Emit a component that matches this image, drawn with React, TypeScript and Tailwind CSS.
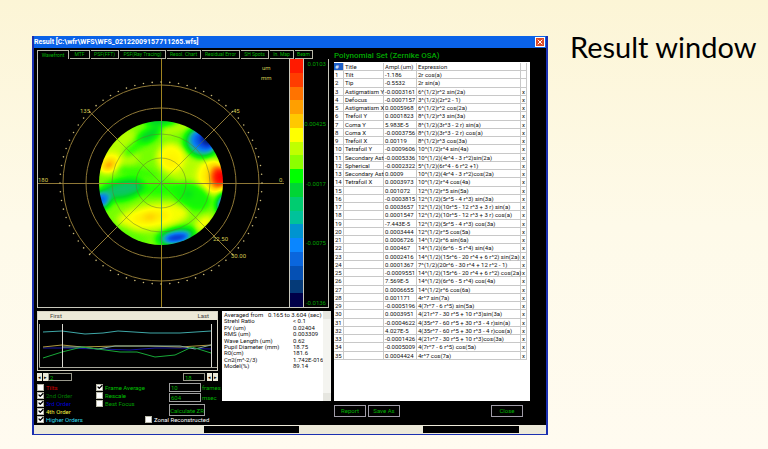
import type { ReactNode } from 'react';
import { Check, X } from 'lucide-react';

const TABS = [
  'Wavefront',
  'MTF',
  'PSF(FFT)',
  'PSF(Ray Tracing)',
  'Resol. Chart',
  'Residual Error',
  'SH Spots',
  'In. Map',
  'Beam',
];

const TAB_WIDTH = [
  'w-8',
  'w-5',
  'w-7',
  'w-[46px]',
  'w-[34px]',
  'w-[38px]',
  'w-7',
  'w-6',
  'w-[18px]',
];

const SCALE_COLORS = [
  'bg-[#ff1a00]',
  'bg-[#ff3d00]',
  'bg-[#ff7300]',
  'bg-[#ff9f00]',
  'bg-[#ffc800]',
  'bg-[#ffff00]',
  'bg-[#c0ff00]',
  'bg-[#8cff00]',
  'bg-[#00ff00]',
  'bg-[#00d535]',
  'bg-[#00cc70]',
  'bg-[#00c29a]',
  'bg-[#0094d0]',
  'bg-[#0a86ff]',
  'bg-[#0a66dd]',
  'bg-[#0550b4]',
  'bg-[#053a78]',
  'bg-[#000048]',
];

const SCALE_LABELS = ['0.0103', '0.00425', '-0.0017', '-0.0075', '-0.0136'];

// [title, amplitude, expression]
const TERMS: [string, string, string][] = [
  ['Tilt', '-1.186', '2r cos(a)'],
  ['Tip', '-0.5532', '2r sin(a)'],
  ['Astigmatism Y', '-0.0003161', '6^(1/2)r^2 sin(2a)'],
  ['Defocus', '-0.0007157', '3^(1/2)(2r^2 - 1)'],
  ['Astigmatism X', '0.0005968', '6^(1/2)r^2 cos(2a)'],
  ['Trefoil Y', '0.0001823', '8^(1/2)r^3 sin(3a)'],
  ['Coma Y', '5.983E-5', '8^(1/2)(3r^3 - 2 r) sin(a)'],
  ['Coma X', '-0.0003756', '8^(1/2)(3r^3 - 2 r) cos(a)'],
  ['Trefoil X', '0.00119', '8^(1/2)r^3 cos(3a)'],
  ['Tetrafoil Y', '-0.0009606', '10^(1/2)r^4 sin(4a)'],
  ['Secondary Ast', '-0.0005336', '10^(1/2)(4r^4 - 3 r^2)sin(2a)'],
  ['Spherical', '-0.0002322', '5^(1/2)(6r^4 - 6 r^2 +1)'],
  ['Secondary Ast', '0.0009', '10^(1/2)(4r^4 - 3 r^2)cos(2a)'],
  ['Tetrafoil X', '0.0003973', '10^(1/2)r^4 cos(4a)'],
  ['', '0.001072', '12^(1/2)r^5 sin(5a)'],
  ['', '-0.0003815', '12^(1/2)(5r^5 - 4 r^3) sin(3a)'],
  ['', '0.0003657', '12^(1/2)(10r^5 - 12 r^3 + 3 r) sin(a)'],
  ['', '0.0001547', '12^(1/2)(10r^5 - 12 r^3 + 3 r) cos(a)'],
  ['', '-7.443E-5', '12^(1/2)(5r^5 - 4 r^3) cos(3a)'],
  ['', '0.0003444', '12^(1/2)r^5 cos(5a)'],
  ['', '0.0006726', '14^(1/2)r^6 sin(6a)'],
  ['', '0.000467', '14^(1/2)(6r^6 - 5 r^4) sin(4a)'],
  ['', '0.0002416', '14^(1/2)(15r^6 - 20 r^4 + 6 r^2) sin(2a)'],
  ['', '0.0001367', '7^(1/2)(20r^6 - 30 r^4 + 12 r^2 - 1)'],
  ['', '-0.0009551', '14^(1/2)(15r^6 - 20 r^4 + 6 r^2) cos(2a)'],
  ['', '7.569E-5', '14^(1/2)(6r^6 - 5 r^4) cos(4a)'],
  ['', '0.0006655', '14^(1/2)r^6 cos(6a)'],
  ['', '0.001171', '4r^7 sin(7a)'],
  ['', '-0.0005196', '4(7r^7 - 6 r^5) sin(5a)'],
  ['', '0.0003951', '4(21r^7 - 30 r^5 + 10 r^3)sin(3a)'],
  ['', '-0.0004622', '4(35r^7 - 60 r^5 + 30 r^3 - 4 r)sin(a)'],
  ['', '4.027E-5', '4(35r^7 - 60 r^5 + 30 r^3 - 4 r)cos(a)'],
  ['', '-0.0001426', '4(21r^7 - 30 r^5 + 10 r^3)cos(3a)'],
  ['', '-0.0005009', '4(7r^7 - 6 r^5) cos(5a)'],
  ['', '0.0004424', '4r^7 cos(7a)'],
];

const RESULTS: [string, string][] = [
  ['Averaged from', '0.165 to 3.604 (sec)'],
  ['Strehl Ratio', '< 0.1'],
  ['PV (um)', '0.02404'],
  ['RMS (um)', '0.003309'],
  ['Wave Length (um)', '0.62'],
  ['Pupil Diameter (mm)', '18.75'],
  ['R0(cm)', '181.6'],
  ['Cn2(m^-2/3)', '1.742E-016'],
  ['Model(%)', '89.14'],
];

// Relief of the wavefront as grey levels: [cx, cy, rx, ry, rotation, level]
const RELIEF: [number, number, number, number, number, number][] = [
  [122, 150, 18, 22, 20, 160],
  [192, 166, 26, 18, 0, 160],
  [136, 172, 24, 5, 10, 132],
  [185, 125, 22, 5, 10, 134],
  [160, 121, 16, 4, 0, 92],
  [176, 128, 24, 5, -18, 160],
  [148, 136, 15, 6, -32, 100],
  [134, 148, 12, 5, -35, 128],
  [201, 143, 17, 15, 20, 90],
  [203, 141, 13, 11, 30, 40],
  [208, 139, 8, 7, 30, 0],
  [171, 158, 14, 15, -10, 180],
  [171, 161, 7, 6, 0, 186],
  [109, 163, 13, 10, -30, 180],
  [109, 165, 7, 5, -30, 218],
  [211, 177, 14, 17, 0, 184],
  [217, 177, 9, 14, 0, 216],
  [221, 177, 9, 10, 0, 255],
  [160, 189, 30, 7, 0, 128],
  [122, 190, 23, 11, -12, 110],
  [124, 189, 19, 8, -12, 88],
  [101, 200, 9, 8, 0, 42],
  [192, 196, 20, 13, 25, 122],
  [188, 194, 4, 3, 0, 100],
  [223, 203, 5, 9, 20, 16],
  [153, 217, 36, 13, -8, 176],
  [151, 217, 19, 6, -8, 188],
  [150, 217, 6, 2, -8, 218],
  [204, 223, 10, 6, -35, 178],
  [128, 234, 22, 6, 25, 140],
  [176, 236, 20, 8, -12, 92],
  [177, 238, 13, 5, -8, 14],
];

const TICKS = Array.from({ length: 72 }, (_, i) => {
  const a = (i * Math.PI) / 36;
  return { x: 161 + 101 * Math.cos(a), y: 183 + 101 * Math.sin(a) };
});

function WavefrontPlot() {
  return (
    <svg viewBox="38 59 251 248" className="h-[248px] w-[251px] shrink-0" role="img" aria-label="Wavefront">
      <defs>
        <clipPath id="pupil">
          <circle cx="161" cy="183" r="62" />
        </clipPath>
        <filter
          id="relief"
          filterUnits="userSpaceOnUse"
          x="85"
          y="105"
          width="155"
          height="155"
          colorInterpolationFilters="sRGB"
        >
          <feGaussianBlur stdDeviation="3" />
          <feComponentTransfer>
            <feFuncR type="table" tableValues="0 0.03 0.03 0.08 0 0.1 0.6 1 1 1 1" />
            <feFuncG type="table" tableValues="0.1 0.25 0.5 0.72 0.85 1 1 1 0.8 0.4 0" />
            <feFuncB type="table" tableValues="0.4 0.85 0.95 0.6 0.15 0 0 0 0 0 0" />
          </feComponentTransfer>
        </filter>
      </defs>
      <g fill="none" stroke="#8f7836">
        <circle cx="161" cy="183" r="75" />
        <circle cx="161" cy="183" r="98" />
        <path d="M90 112L232 254M232 112L90 254" />
      </g>
      <g clipPath="url(#pupil)">
        <g filter="url(#relief)">
          <rect x="80" y="100" width="165" height="165" fill="rgb(146,146,146)" />
          {RELIEF.map(([cx, cy, rx, ry, rot, v], i) => (
            <ellipse
              key={i}
              cx={cx}
              cy={cy}
              rx={rx}
              ry={ry}
              fill={`rgb(${v},${v},${v})`}
              transform={`rotate(${rot} ${cx} ${cy})`}
            />
          ))}
        </g>
      </g>
      <g fill="none" stroke="#5f7a30" strokeOpacity="0.5">
        <circle cx="161" cy="183" r="25" />
        <circle cx="161" cy="183" r="49" />
        <path d="M117 139L205 227M205 139L117 227" />
      </g>
      <path d="M38 183.5H284" stroke="#8f7836" fill="none" />
      <path d="M161.500 59V121M161.500 245V307" stroke="#a08420" fill="none" />
      <path d="M161.500 121V245" stroke="#3f9a60" fill="none" />
      {TICKS.map((t, i) => (
        <circle key={i} cx={t.x} cy={t.y} r="0.8" fill="#c9b878" />
      ))}
      <g fill="#d2c850" className="font-['Roboto',sans-serif] text-[6px]">
        <text x="262" y="70">um</text>
        <text x="261" y="80">mm</text>
        <text x="80" y="113">135</text>
        <text x="233" y="113">45</text>
        <text x="38" y="182">180</text>
        <text x="279" y="182">0.</text>
        <text x="213" y="241">22.50</text>
        <text x="231" y="258">30.00</text>
      </g>
    </svg>
  );
}

function TrendChart() {
  return (
    <svg viewBox="38 320 179 50" preserveAspectRatio="none" className="h-[50px] w-full" role="img" aria-label="Orders by frame">
      <path d="M39.500 324V367.500H217" stroke="#a8a89c" fill="none" />
      <g fill="none">
        <polyline stroke="#3fa8a8" points="43,332 62,331 85,334 103,333 118,331 150,333 180,333 211,331" />
        <polyline stroke="#1414a0" points="43,348 62,348 100,349 130,350 155,348 180,348 211,349" />
        <polyline stroke="#b09a40" points="43,347 62,345 82,347 115,346 150,346 180,347 211,345" />
        <polyline stroke="#7fa8a0" points="62,347 82,347 98,349 115,346 150,346 180,346 195,349 211,345" />
        <polyline stroke="#18a838" points="43,358 62,352 82,347 105,350 120,352 137,352 155,357 175,355 192,347 211,353" />
      </g>
      <path d="M62.500 324V367M211.500 324V367" stroke="#d8d8d0" fill="none" />
    </svg>
  );
}

function CheckBox({ label, color, checked }: { label: string; color: string; checked?: boolean }) {
  return (
    <label className={`flex h-2 items-center gap-0.5 whitespace-nowrap ${color}`}>
      <span className="grid size-[7px] shrink-0 place-items-center">
        <input
          type="checkbox"
          defaultChecked={checked}
          className="peer col-start-1 row-start-1 size-[7px] appearance-none border border-[#b8b8a8] bg-white"
        />
        <Check className="pointer-events-none col-start-1 row-start-1 hidden size-[6px] text-black peer-checked:block" strokeWidth={5} />
      </span>
      {label}
    </label>
  );
}

function DarkButton({ children }: { children: ReactNode }) {
  return (
    <button
      type="button"
      className="h-3 w-8 border border-[#a09ca8] bg-black text-center leading-[10px] whitespace-nowrap text-[#00b400]"
    >
      {children}
    </button>
  );
}

function Stepper() {
  return (
    <div className="flex gap-px">
      {['◂', '▸'].map((g, i) => (
        <button
          key={g}
          type="button"
          aria-label={i === 0 ? 'Previous' : 'Next'}
          className="h-2 w-[5px] bg-[#ece9d8] text-[5px] leading-[8px] text-black"
        >
          {g}
        </button>
      ))}
    </div>
  );
}

function Controls() {
  return (
    <div className="w-[181px] shrink-0">
      <div className="border border-[#d8d4c4]">
        <div className="flex h-2 items-center justify-between bg-[#ece9d8] pr-2 pl-3 leading-[8px] text-[#444]">
          <span>First</span>
          <span>Last</span>
        </div>
        <TrendChart />
      </div>

      <div className="mt-0.5 flex items-center justify-between">
        <div className="flex">
          <Stepper />
          <input
            aria-label="First frame"
            defaultValue="2"
            className="h-2 w-6 border border-[#99998c] bg-black px-px leading-[6px] text-[#00b400]"
          />
        </div>
        <div className="flex gap-0.5">
          <input
            aria-label="Last frame"
            defaultValue="18"
            className="h-2 w-[22px] border border-[#99998c] bg-black px-px leading-[6px] text-[#00b400]"
          />
          <Stepper />
        </div>
      </div>

      <div className="mt-0.5 flex">
        <div className="w-[59px]">
          <CheckBox label="Tilts" color="text-[#d80000]" />
          <CheckBox label="2nd Order" color="text-[#007a00]" checked />
          <CheckBox label="3rd Order" color="text-[#0000d0]" checked />
          <CheckBox label="4th Order" color="text-[#f0f040]" checked />
          <CheckBox label="Higher Orders" color="text-[#30d8e8]" checked />
        </div>
        <div className="flex-1">
          <CheckBox label="Frame Average" color="text-[#00c000]" checked />
          <CheckBox label="Rescale" color="text-[#00c000]" />
          <CheckBox label="Best Focus" color="text-[#00a000]" />
        </div>
        <div className="w-[49px] text-[#00b400]">
          <label className="flex h-[9px] items-center gap-px">
            <input defaultValue="10" className="h-[9px] w-8 border border-[#a0a0a0] bg-black px-px leading-[7px]" />
            frames
          </label>
          <label className="mt-px flex h-[9px] items-center gap-px">
            <input defaultValue="604" className="h-[9px] w-8 border border-[#a0a0a0] bg-black px-px leading-[7px]" />
            msec
          </label>
          <button
            type="button"
            className="mt-0.5 flex h-3 w-[36px] items-center justify-center border border-[#a0a0a0] bg-black whitespace-nowrap"
          >
            Calculate ZR
          </button>
        </div>
      </div>
    </div>
  );
}

function PolynomialTable() {
  const cell = 'border-r border-b border-[#c8c8c8] p-0 pl-px text-left align-middle font-normal whitespace-nowrap';
  return (
    <table className="h-[297px] w-[193px] table-fixed border-separate border-spacing-0 text-[#111]">
      <colgroup>
        <col className="w-[10px]" />
        <col className="w-10" />
        <col className="w-[33px]" />
        <col className="w-[104px]" />
        <col className="w-[6px]" />
      </colgroup>
      <thead>
        <tr>
          <th className={`${cell} bg-[#1c5fc8] text-white`}>#</th>
          <th className={cell}>Title</th>
          <th className={cell}>Ampl.(um)</th>
          <th className={cell}>Expression</th>
          <th className={cell} aria-label="Used" />
        </tr>
      </thead>
      <tbody>
        {TERMS.map(([title, ampl, expr], i) => (
          <tr key={i}>
            <td className={cell}>{i + 1}</td>
            <td className={cell}>{title}</td>
            <td className={cell}>{ampl}</td>
            <td className={cell}>{expr}</td>
            <td className={cell}>{i > 1 ? 'x' : ''}</td>
          </tr>
        ))}
      </tbody>
    </table>
  );
}

function ResultWindow() {
  return (
    <section className="flex-1 border-2 border-t-0 border-b border-[#1a2fb0] bg-black font-['Roboto',sans-serif] text-[6px] leading-[7px]">
      <header className="flex h-3 items-center justify-between bg-[#0a62e8] pr-px">
        <h2 className="text-[7px] leading-[12px] font-bold whitespace-nowrap text-white">
          Result [C:\wfr\WFS\WFS_02122009157711265.wfs]
        </h2>
        <button type="button" aria-label="Close window" className="grid size-[10px] place-items-center border border-white bg-[#dc4a28]">
          <X className="size-2 text-white" strokeWidth={3} />
        </button>
      </header>

      <div className="flex gap-[3px] pt-0.5 pl-[3px]">
        <div className="w-[294px] shrink-0">
          <div role="tablist" className="flex gap-px text-[#00b400]">
            {TABS.map((tab, i) => (
              <button
                key={tab}
                type="button"
                role="tab"
                aria-selected={i === 0}
                className={`h-[9px] border-t border-r border-[#b8b8a8] text-center text-[5px] leading-[7px] whitespace-nowrap ${TAB_WIDTH[i]} ${
                  i === 0 ? 'border-l' : 'border-b'
                }`}
              >
                {tab}
              </button>
            ))}
          </div>

          <div className="mr-0.5 flex border-r border-b border-l border-[#c8c8bc]">
            <WavefrontPlot />
            <div className="flex w-[15px] flex-col border-x border-[#c8c8bc]">
              {SCALE_COLORS.map((c) => (
                <div key={c} className={`flex-1 ${c}`} />
              ))}
            </div>
            <div className="flex flex-1 flex-col justify-between py-px pr-0.5 text-right text-[#00a000]">
              {SCALE_LABELS.map((l) => (
                <span key={l}>{l}</span>
              ))}
            </div>
          </div>

          <div className="mt-[3px] flex gap-1">
            <Controls />
            <div className="flex h-[90px] flex-1 bg-white text-[#111]">
              <dl className="flex h-[58px] flex-1 flex-col justify-between pt-px pl-0.5 leading-[6px]">
                {RESULTS.map(([k, v], i) => (
                  <div key={k} className="flex whitespace-nowrap">
                    <dt className={i === 0 ? 'w-[44px]' : 'w-[69px]'}>{k}</dt>
                    <dd>{v}</dd>
                  </div>
                ))}
              </dl>
              <div className="flex w-2 flex-col justify-between bg-[#f4f4f0]">
                <span className="h-2 bg-[#e6e6e0]" />
                <span className="h-2 bg-[#e6e6e0]" />
              </div>
            </div>
          </div>
          <div className="-mt-2 pl-[108px]">
            <CheckBox label="Zonal Reconstructed" color="text-white" />
          </div>
        </div>

        <div className="min-w-0 flex-1 pr-4">
          <h3 className="h-3 text-[8px] leading-[12px] font-medium whitespace-nowrap text-[#00a800]">Polynomial Set (Zernike OSA)</h3>
          <div className="h-[339px] bg-white pt-px">
            <PolynomialTable />
          </div>
          <div className="mt-1 flex gap-0.5 pr-[7px]">
            <DarkButton>Report</DarkButton>
            <DarkButton>Save As</DarkButton>
            <div className="flex-1" />
            <DarkButton>Close</DarkButton>
          </div>
        </div>
      </div>

      <footer className="mt-0.5 grid h-[9px] grid-cols-[170fr_95fr_124fr_96fr_27fr] bg-[#ece9d8] py-px">
        <span />
        <span className="bg-black" />
        <span />
        <span className="bg-black" />
      </footer>
    </section>
  );
}

export default function App() {
  return (
    <main className="flex min-h-screen items-start gap-[22px] bg-linear-to-b from-[#fcf5d6] via-[#fefae9] via-50% to-[#fffbf0] pt-9 pr-3 pl-8">
      <ResultWindow />
      <h1 className="w-[186px] shrink-0 font-['Lato',sans-serif] text-[29px] leading-[22px] font-normal whitespace-nowrap text-black">
        Result window
      </h1>
    </main>
  );
}
